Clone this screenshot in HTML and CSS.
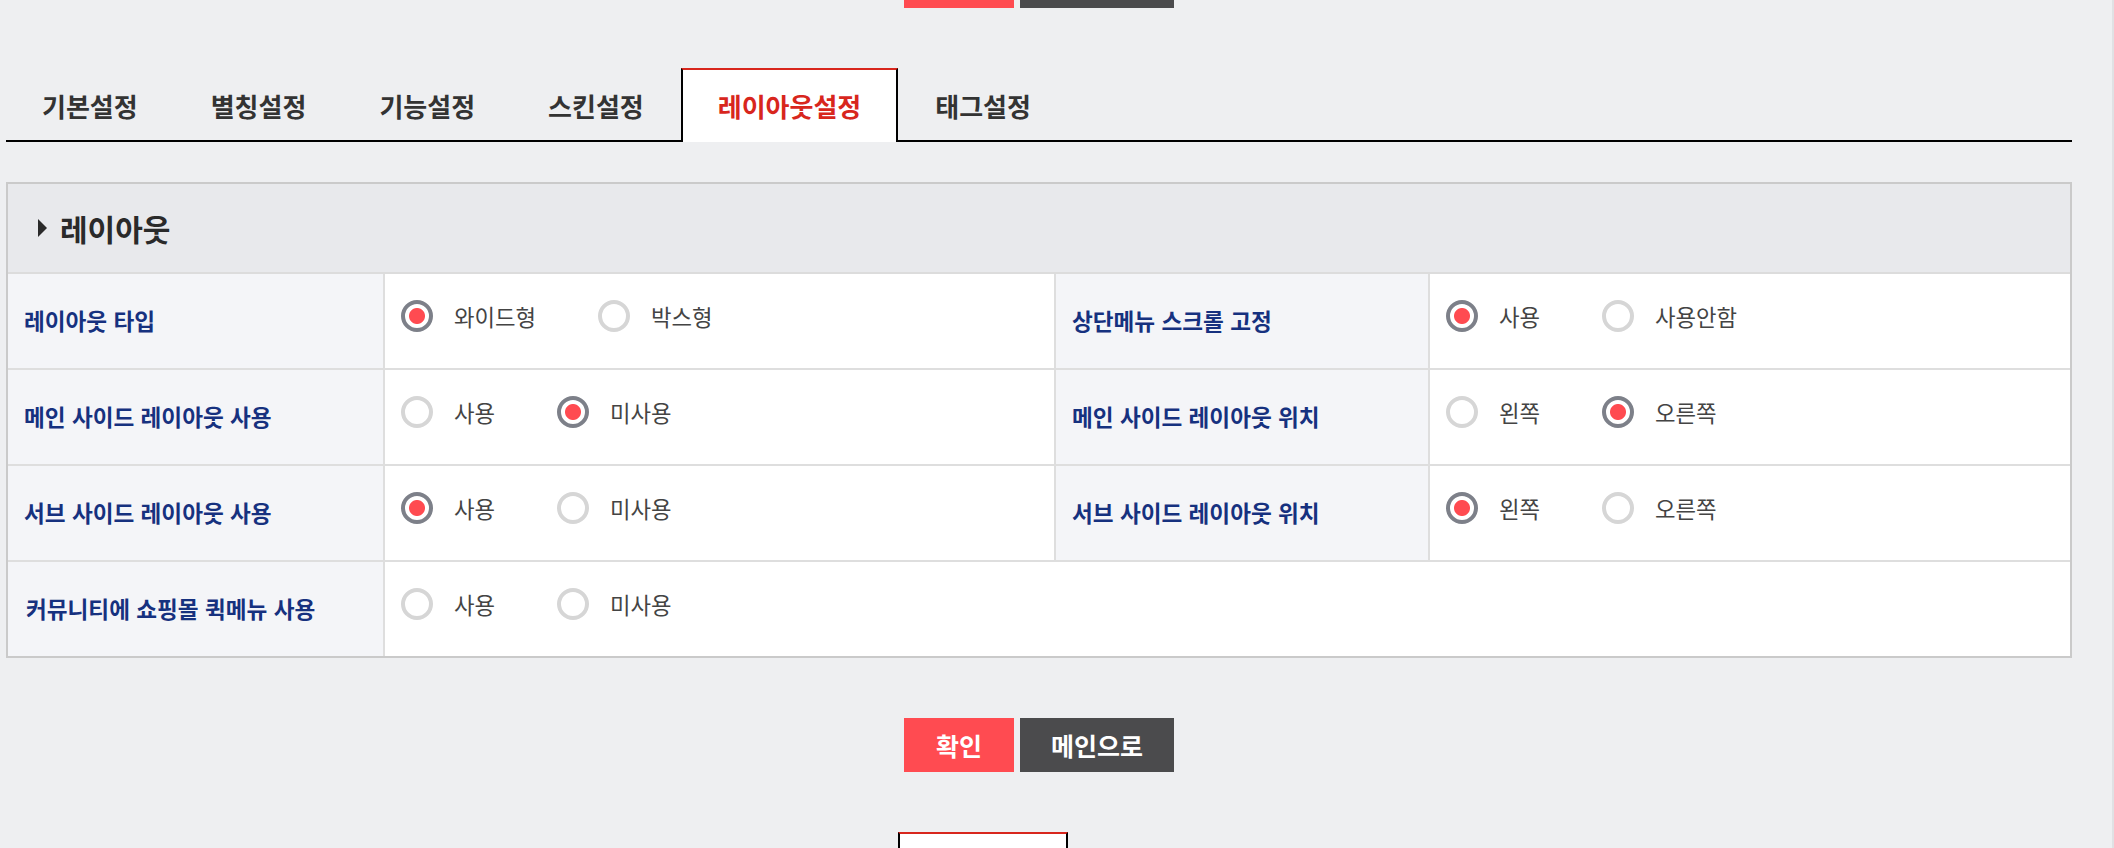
FILE: index.html
```html
<!DOCTYPE html>
<html lang="ko">
<head>
<meta charset="utf-8">
<title>레이아웃설정</title>
<link rel="stylesheet" href="styles.css">
</head>
<body>
<div class="page">
  <div class="btns btns-top">
    <button class="btn btn-ok">확인</button>
    <button class="btn btn-main">메인으로</button>
  </div>

  <ul class="tabs">
    <li class="tab">기본설정</li>
    <li class="tab">별칭설정</li>
    <li class="tab">기능설정</li>
    <li class="tab">스킨설정</li>
    <li class="tab active">레이아웃설정</li>
    <li class="tab">태그설정</li>
  </ul>

  <section class="panel">
    <div class="panel-head"><span class="arrow"></span><h2 class="panel-title">레이아웃</h2></div>

    <div class="row">
      <div class="cell label">레이아웃 타입</div>
      <div class="cell value">
        <label class="radio"><span class="dot on"></span>와이드형</label>
        <label class="radio"><span class="dot"></span>박스형</label>
      </div>
      <div class="cell label">상단메뉴 스크롤 고정</div>
      <div class="cell value end">
        <label class="radio"><span class="dot on"></span>사용</label>
        <label class="radio"><span class="dot"></span>사용안함</label>
      </div>
    </div>

    <div class="row">
      <div class="cell label">메인 사이드 레이아웃 사용</div>
      <div class="cell value">
        <label class="radio"><span class="dot"></span>사용</label>
        <label class="radio"><span class="dot on"></span>미사용</label>
      </div>
      <div class="cell label">메인 사이드 레이아웃 위치</div>
      <div class="cell value end">
        <label class="radio"><span class="dot"></span>왼쪽</label>
        <label class="radio"><span class="dot on"></span>오른쪽</label>
      </div>
    </div>

    <div class="row">
      <div class="cell label">서브 사이드 레이아웃 사용</div>
      <div class="cell value">
        <label class="radio"><span class="dot on"></span>사용</label>
        <label class="radio"><span class="dot"></span>미사용</label>
      </div>
      <div class="cell label">서브 사이드 레이아웃 위치</div>
      <div class="cell value end">
        <label class="radio"><span class="dot on"></span>왼쪽</label>
        <label class="radio"><span class="dot"></span>오른쪽</label>
      </div>
    </div>

    <div class="row row-last">
      <div class="cell label label-shift">커뮤니티에 쇼핑몰 퀵메뉴 사용</div>
      <div class="cell value end span3">
        <label class="radio"><span class="dot"></span>사용</label>
        <label class="radio"><span class="dot"></span>미사용</label>
      </div>
    </div>
  </section>

  <div class="btns">
    <button class="btn btn-ok">확인</button>
    <button class="btn btn-main">메인으로</button>
  </div>

  <div class="next-tab"></div>
</div>
</body>
</html>
```

FILE: styles.css
```css
html, body {
  margin: 0;
  padding: 0;
  overflow: hidden;
}

body {
  background: #eeeff1;
  font-family: "Noto Sans CJK KR", "Noto Sans", sans-serif;
  color: #333;
  height: 848px;
  box-sizing: border-box;
  border-right: 2px solid #e0e1e4;
}

.page {
  width: 2066px;
  margin: -46px 0 0 6px;
}

/* buttons */
.btns {
  display: flex;
  justify-content: center;
  gap: 6px;
  margin-top: 60px;
}

.btns-top {
  margin-top: 0;
}

.btn {
  height: 54px;
  border: 0;
  padding: 0;
  font-family: inherit;
  font-size: 25px;
  font-weight: 700;
  color: #fff;
  line-height: 54px;
  cursor: pointer;
}

.btn-ok {
  width: 110px;
  background: #ff4b51;
}

.btn-main {
  width: 154px;
  background: #4b4b4d;
}

/* tabs */
.tabs {
  list-style: none;
  margin: 60px 0 0;
  padding: 0;
  display: flex;
  gap: 1px;
  height: 72px;
  border-bottom: 2px solid #000;
}

.tab {
  box-sizing: border-box;
  height: 72px;
  padding: 0 34px;
  border: 2px solid transparent;
  border-bottom: 0;
  display: flex;
  align-items: center;
  justify-content: center;
  font-size: 26px;
  font-weight: 700;
  color: #333;
}

.tab.active {
  height: 74px;
  margin-bottom: -2px;
  padding: 0 35px 2px;
  background: #fff;
  border-color: #000;
  border-top-color: #d8261d;
  color: #d8261d;
}

/* panel */
.panel {
  margin-top: 40px;
  border: 2px solid #cacaca;
  background: #fff;
}

.panel-head {
  height: 88px;
  background: #e8e9ec;
  border-bottom: 2px solid #dcdcdc;
  display: flex;
  align-items: center;
  padding-left: 30px;
  gap: 13px;
}

.arrow {
  width: 0;
  height: 0;
  border-left: 9px solid #2a2a2a;
  border-top: 9px solid transparent;
  border-bottom: 9px solid transparent;
}

.panel-title {
  margin: 0;
  font-size: 30px;
  font-weight: 700;
  color: #2a2a2a;
}

.row {
  display: grid;
  grid-template-columns: 377px 671px 374px 1fr;
  height: 96px;
  box-sizing: border-box;
  border-bottom: 2px solid #dedede;
}

.row-last {
  border-bottom: 0;
  height: 94px;
}

.cell {
  border-right: 2px solid #dedede;
  display: flex;
  align-items: center;
}

.cell.end {
  border-right: 0;
}

.span3 {
  grid-column: 2 / 5;
}

.label {
  background: #f4f5f8;
  padding: 0 0 2px 16px;
  font-size: 22.6px;
  font-weight: 700;
  color: #16317f;
}

.label-shift {
  padding-left: 18px;
}

.value {
  padding: 0 16px 10px;
}

.radio {
  display: inline-flex;
  align-items: center;
  gap: 21px;
  margin-right: 62px;
  font-size: 22.3px;
  color: #444;
  cursor: pointer;
}

.dot {
  width: 32px;
  height: 32px;
  box-sizing: border-box;
  border-radius: 50%;
  border: 4px solid #d6d6d6;
  background: #fff;
}

.dot.on {
  border-color: #7d8089;
  background: radial-gradient(circle, #ff4b51 0 7.5px, #fff 8.5px);
}

/* next section tab peeking at the bottom */
.next-tab {
  width: 170px;
  height: 40px;
  box-sizing: border-box;
  margin: 60px 0 0 892px;
  background: #fff;
  border: 2px solid #000;
  border-top-color: #d8261d;
  border-bottom: 0;
}
```
